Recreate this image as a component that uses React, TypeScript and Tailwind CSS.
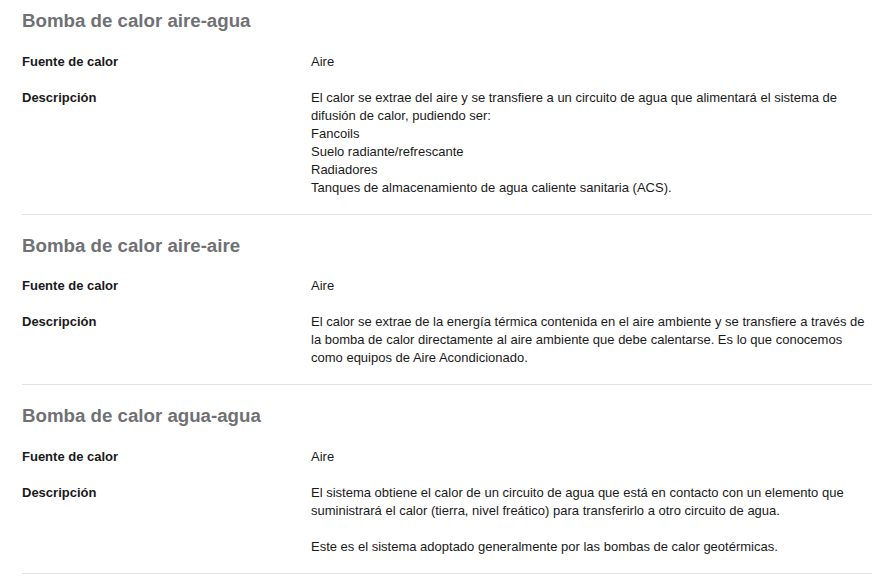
const sections = [
  {
    title: "Bomba de calor aire-agua",
    source: "Aire",
    description: [
      [
        "El calor se extrae del aire y se transfiere a un circuito de agua que alimentará el sistema de difusión de calor, pudiendo ser:",
        "Fancoils",
        "Suelo radiante/refrescante",
        "Radiadores",
        "Tanques de almacenamiento de agua caliente sanitaria (ACS).",
      ],
    ],
  },
  {
    title: "Bomba de calor aire-aire",
    source: "Aire",
    description: [
      [
        "El calor se extrae de la energía térmica contenida en el aire ambiente y se transfiere a través de la bomba de calor directamente al aire ambiente que debe calentarse. Es lo que conocemos como equipos de Aire Acondicionado.",
      ],
    ],
  },
  {
    title: "Bomba de calor agua-agua",
    source: "Aire",
    description: [
      [
        "El sistema obtiene el calor de un circuito de agua que está en contacto con un elemento que suministrará el calor (tierra, nivel freático) para transferirlo a otro circuito de agua.",
      ],
      ["Este es el sistema adoptado generalmente por las bombas de calor geotérmicas."],
    ],
  },
];

export default function App() {
  return (
    <div
      className="bg-white text-[#1a1a1a] px-[22px] w-[894px]"
      style={{ fontFamily: '"Liberation Sans", Arial, sans-serif' }}
    >
      {sections.map((s) => (
        <section key={s.title} className="border-b border-[#e0e2e5] pt-[19px] first:pt-[9px] pb-[17px]">
          <h2 className="text-[18.7px] leading-[24px] font-bold text-[#6f7175]">{s.title}</h2>
          <div className="flex mt-[19.5px] text-[13px] leading-[18px]">
            <div className="w-[289px] shrink-0 font-bold">Fuente de calor</div>
            <div>{s.source}</div>
          </div>
          <div className="flex mt-[18px] text-[13px] leading-[18px]">
            <div className="w-[289px] shrink-0 font-bold">Descripción</div>
            <div className="w-[561px] flex flex-col gap-[18px]">
              {s.description.map((p, i) => (
                <p key={i}>
                  {p.map((line, j) => (
                    <span key={j} className="block">
                      {line}
                    </span>
                  ))}
                </p>
              ))}
            </div>
          </div>
        </section>
      ))}
    </div>
  );
}
